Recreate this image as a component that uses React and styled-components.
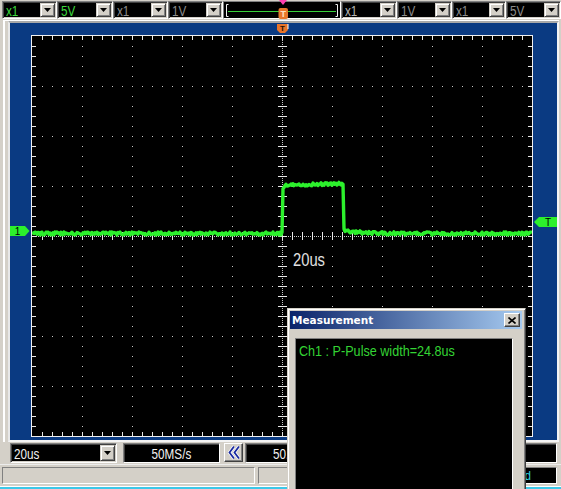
import React from 'react';
import styled, { createGlobalStyle } from 'styled-components';

const FACE = '#d4d0c8';
const BLUE = '#0a3a82';
const TRACE = '#2cf02c';

const GlobalStyle = createGlobalStyle`
  html, body {
    margin: 0;
    padding: 0;
    background: ${FACE};
  }
  body {
    font-family: "Liberation Sans", Arial, sans-serif;
  }
`;

function makeRandom(seed) {
  let s = seed;
  return () => {
    s = (s * 16807) % 2147483647;
    return s / 2147483647;
  };
}

// 10 x 8 divisions of 50px on a 500 x 400 screen
const buildGrid = () => {
  let dots = '';
  let ticks = '';
  for (let i = 1; i < 10; i++) {
    if (i === 5) continue;
    for (let y = 10; y < 400; y += 10) dots += `M${i * 50} ${y}h1v1h-1z`;
  }
  for (let j = 1; j < 8; j++) {
    if (j === 4) continue;
    for (let x = 10; x < 500; x += 10) dots += `M${x} ${j * 50}h1v1h-1z`;
  }
  for (let y = 0; y < 400; y += 2) dots += `M250 ${y}h1v1h-1z`;
  for (let x = 0; x < 500; x += 2) dots += `M${x} 200h1v1h-1z`;
  for (let y = 10; y < 400; y += 10) ticks += `M246 ${y}h9v1h-9z`;
  for (let x = 10; x < 500; x += 10) ticks += `M${x} 196h1v8h-1z`;
  for (let x = 10; x < 500; x += 10) ticks += `M${x} 0h1v4h-1zM${x} 396h1v4h-1z`;
  for (let y = 10; y < 400; y += 10) ticks += `M0 ${y}h4v1h-4zM496 ${y}h4v1h-4z`;
  return { dots, ticks };
};

const buildTrace = () => {
  const rnd = makeRandom(20240);
  const level = (x) => {
    if (x <= 250) return 197.5;
    if (x <= 311) return 149.4 - (x - 251) * 0.03 + (x < 254 ? (254 - x) * 0.8 : 0);
    return 197.5 - 3.5 * Math.exp(-(x - 312) / 14);
  };
  let d = '';
  for (let x = 0; x <= 500; x++) {
    const y = level(x) + (rnd() - 0.5) * 3;
    d += (x === 0 ? 'M' : 'L') + x + ' ' + y.toFixed(1);
  }
  return d;
};

const GRID = buildGrid();
const TRACE_PATH = buildTrace();

const Window = styled.div`
  position: relative;
  width: 561px;
  height: 489px;
  overflow: hidden;
  background: ${FACE};
  display: flex;
  flex-direction: column;
`;

const Narrow = styled.span`
  display: inline-block;
  font-family: "Liberation Sans", Arial, sans-serif;
  font-size: ${(p) => p.$size || 15}px;
  line-height: 1;
  white-space: nowrap;
  transform: scaleX(${(p) => p.$scale || 0.78});
  transform-origin: ${(p) => (p.$center ? 'center' : 'left')} center;
`;

/* ---------- top bar ---------- */

const TopBar = styled.div`
  display: flex;
  align-items: flex-start;
  height: 20px;
  padding: 1px 0 0 2px;
  box-sizing: border-box;
`;

const Combo = styled.div`
  display: flex;
  width: ${(p) => p.$w}px;
  height: ${(p) => p.$h || 18}px;
  box-sizing: border-box;
  border: 1px solid;
  border-color: #808080 #ffffff #ffffff #808080;
  padding: 1px;
  background: #000;
  box-shadow: inset 1px 1px #404040, inset -1px -1px ${FACE};
  flex: none;
`;

const Field = styled.div`
  flex: 1;
  display: flex;
  align-items: center;
  padding-left: 2px;
  overflow: hidden;
  color: ${(p) => p.$color || '#f0f0f0'};
`;

const DropButton = styled.div`
  width: 15px;
  flex: none;
  box-sizing: border-box;
  background: ${FACE};
  border: 1px solid;
  border-color: ${FACE} #404040 #404040 ${FACE};
  box-shadow: inset 1px 1px #fff, inset -1px -1px #808080;
  display: flex;
  align-items: center;
  justify-content: center;
`;

const Slider = styled.div`
  position: relative;
  width: 118px;
  height: 18px;
  flex: none;
  box-sizing: border-box;
  border: 1px solid;
  border-color: #808080 #ffffff #ffffff #808080;
  background: #000;
`;

const SliderKnob = styled.svg`
  position: absolute;
  left: 54px;
  top: -2px;
`;

/* ---------- scope area ---------- */

const MainArea = styled.div`
  display: flex;
  padding: 0 2px 0 3px;
  flex: none;
`;

const Frame = styled.div`
  flex: 1;
  border-top: 1px solid #ffffff;
  border-left: 2px solid #ffffff;
  padding-left: 3px;
  display: flex;
`;

const BluePanel = styled.div`
  position: relative;
  flex: 1;
  background: ${BLUE};
  border: 2px solid;
  border-color: #a8a8a8 #f4f4f4 #f4f4f4 #e8e8e8;
  padding: 12px 24px 3px 21px;
`;

const Screen = styled.div`
  width: 500px;
  height: 400px;
  border: 1px solid #f0f0f0;
  background: #000;
`;

const ScopeSvg = styled.svg`
  display: block;
`;

const Marker = styled.svg`
  position: absolute;
  left: ${(p) => p.$left}px;
  top: ${(p) => p.$top}px;
`;

/* ---------- bottom bars ---------- */

const BottomBar = styled.div`
  display: flex;
  align-items: flex-start;
  height: 22px;
  padding: 1px 4px 0 10px;
  box-sizing: border-box;
  flex: none;
`;

const Display = styled.div`
  width: ${(p) => (p.$w ? `${p.$w}px` : 'auto')};
  flex: ${(p) => (p.$w ? 'none' : '1')};
  height: 20px;
  margin-left: ${(p) => p.$gap || 0}px;
  box-sizing: border-box;
  border: 1px solid;
  border-color: #808080 #ffffff #ffffff #808080;
  box-shadow: inset 1px 1px #404040;
  background: #000;
  color: #f0f0f0;
  display: flex;
  align-items: center;
  justify-content: center;
`;

const ArrowButton = styled.div`
  width: 19px;
  height: 19px;
  margin-left: 4px;
  flex: none;
  box-sizing: border-box;
  background: ${FACE};
  border: 1px solid;
  border-color: #ffffff #404040 #404040 #ffffff;
  box-shadow: inset -1px -1px #808080;
  display: flex;
  align-items: center;
  justify-content: center;
`;

const StatusBar = styled.div`
  display: flex;
  height: 22px;
  padding: 2px 4px 2px 2px;
  gap: 3px;
  box-sizing: border-box;
  flex: none;
  border-top: 1px solid #ececec;
`;

const StatusPanel = styled.div`
  width: ${(p) => p.$w}px;
  flex: ${(p) => (p.$grow ? '1' : 'none')};
  box-sizing: border-box;
  border: 1px solid;
  border-color: #808080 #ffffff #ffffff #808080;
  background: ${(p) => (p.$dark ? '#000' : FACE)};
  color: #30d8e8;
  display: flex;
  align-items: center;
  padding-left: ${(p) => p.$pad || 0}px;
`;

const TaskLine = styled.div`
  height: 3px;
  flex: none;
  background: #3cc8e8;
  border-top: 1px solid #ffffff;
  box-sizing: border-box;
`;

/* ---------- measurement window ---------- */

const MeasureWindow = styled.div`
  position: absolute;
  left: 287px;
  top: 308px;
  width: 239px;
  height: 200px;
  box-sizing: border-box;
  background: ${FACE};
  border: 1px solid;
  border-color: ${FACE} #404040 #404040 ${FACE};
  box-shadow: inset 1px 1px #fff, inset -1px -1px #808080;
  padding: 2px 3px 2px 2px;
  display: flex;
  flex-direction: column;
`;

const TitleBar = styled.div`
  height: 18px;
  flex: none;
  display: flex;
  align-items: center;
  justify-content: space-between;
  padding: 0 2px 0 2px;
  background: linear-gradient(to right, #0a246a, #a6caf0);
`;

const Title = styled.span`
  font-family: "DejaVu Sans", Tahoma, sans-serif;
  font-weight: bold;
  font-size: 10.5px;
  color: #ffffff;
`;

const CloseButton = styled.div`
  width: 16px;
  height: 14px;
  box-sizing: border-box;
  background: ${FACE};
  border: 1px solid;
  border-color: #ffffff #404040 #404040 #ffffff;
  box-shadow: inset -1px -1px #808080;
  display: flex;
  align-items: center;
  justify-content: center;
`;

const MeasureBody = styled.div`
  flex: 1;
  display: flex;
  padding: 9px 9px 0 5px;
`;

const MeasureList = styled.div`
  flex: 1;
  background: #000;
  border: 1px solid;
  border-color: #808080 #ffffff #ffffff #808080;
  padding: 3px 3px 0 3px;
  color: #34d434;
`;

const DropArrow = () => (
  <svg width="7" height="4" viewBox="0 0 7 4">
    <path d="M0 0h7l-3.5 4z" fill="#000" />
  </svg>
);

const TopCombo = ({ w, color, children }) => (
  <Combo $w={w}>
    <Field $color={color}>
      <Narrow>{children}</Narrow>
    </Field>
    <DropButton>
      <DropArrow />
    </DropButton>
  </Combo>
);

export default function App() {
  return (
    <>
      <GlobalStyle />
      <Window>
        <TopBar>
          <TopCombo w={55} color="#3cd83c">x1</TopCombo>
          <TopCombo w={56} color="#3cd83c">5V</TopCombo>
          <TopCombo w={55} color="#8c8c8c">x1</TopCombo>
          <TopCombo w={55} color="#8c8c8c">1V</TopCombo>
          <Slider>
            <svg width="116" height="16" viewBox="0 0 116 16">
              <path d="M4.5 2.5H2.5V14.5H4.5" fill="none" stroke="#f0f0f0" />
              <path d="M111.5 2.5H113.5V14.5H111.5" fill="none" stroke="#f0f0f0" />
              <path d="M4 9.5H112" stroke="#38d038" />
            </svg>
            <SliderKnob width="11" height="20" viewBox="0 0 11 20">
              <path d="M1 0h8l-4 5z" fill="#ff3fae" />
              <rect x="0.5" y="8" width="9.5" height="11" rx="2" fill="#e8782c" />
              <text x="5.2" y="17" fontSize="9" fontWeight="bold" textAnchor="middle" fill="#ffe2c4" fontFamily="Liberation Sans, Arial, sans-serif">T</text>
            </SliderKnob>
          </Slider>
          <TopCombo w={56} color="#b4b4b4">x1</TopCombo>
          <TopCombo w={55} color="#8c8c8c">1V</TopCombo>
          <TopCombo w={54} color="#8c8c8c">x1</TopCombo>
          <TopCombo w={55} color="#8c8c8c">5V</TopCombo>
        </TopBar>

        <MainArea>
          <Frame>
            <BluePanel>
              <Screen>
                <ScopeSvg width="500" height="400" viewBox="0 0 500 400">
                  <path d={GRID.dots} fill="#c8c8c8" />
                  <path d={GRID.ticks} fill="#e8e8e8" />
                  <path d={TRACE_PATH} fill="none" stroke={TRACE} strokeWidth="3.4" strokeLinejoin="round" />
                  <text x="261" y="230" fontSize="18" textLength="32" lengthAdjust="spacingAndGlyphs" fill="#e2e2e2" fontFamily="Liberation Sans, Arial, sans-serif">20us</text>
                </ScopeSvg>
              </Screen>

              <Marker $left={267} $top={1} width="12" height="10" viewBox="0 0 12 10">
                <path d="M0 0h11v6l-3 3h-5l-3-3z" fill="#e8742a" />
                <path d="M11 0v5" stroke="#ffffff" />
                <text x="5.5" y="7" fontSize="8" fontWeight="bold" textAnchor="middle" fill="#2a1000" fontFamily="Liberation Sans, Arial, sans-serif">T</text>
              </Marker>

              <Marker $left={0} $top={203} width="20" height="10" viewBox="0 0 20 10">
                <path d="M0 0h15l4.5 5-4.5 5h-15z" fill={TRACE} />
                <text x="7.5" y="9" fontSize="10" textAnchor="middle" fill="#000" fontFamily="Liberation Sans, Arial, sans-serif">1</text>
              </Marker>

              <Marker $left={524} $top={194} width="23" height="10" viewBox="0 0 23 10">
                <path d="M0 5l5-5h18v10h-18z" fill={TRACE} />
                <text x="14" y="9" fontSize="10" textAnchor="middle" fill="#000" fontFamily="Liberation Sans, Arial, sans-serif">T</text>
              </Marker>
            </BluePanel>
          </Frame>
        </MainArea>

        <BottomBar>
          <Combo $w={107} $h={20}>
            <Field>
              <Narrow>20us</Narrow>
            </Field>
            <DropButton>
              <DropArrow />
            </DropButton>
          </Combo>
          <Display $w={97} $gap={6}>
            <Narrow $center>50MS/s</Narrow>
          </Display>
          <ArrowButton>
            <svg width="12" height="15" viewBox="0 0 12 15">
              <path d="M6 1.5L1.5 7.5L6 13.5M11 1.5L6.5 7.5L11 13.5" fill="none" stroke="#ffffff" strokeWidth="3.2" />
              <path d="M6 1.5L1.5 7.5L6 13.5M11 1.5L6.5 7.5L11 13.5" fill="none" stroke="#1a2aa0" strokeWidth="1.8" />
            </svg>
          </ArrowButton>
          <Display $w={92} $gap={2}>
            <Narrow $center>50.0us</Narrow>
          </Display>
          <Display $gap={3} />
        </BottomBar>

        <StatusBar>
          <StatusPanel $w={253} />
          <StatusPanel $w={166} />
          <StatusPanel $grow $dark $pad={56}>
            <Narrow $size={13} $scale={0.85}>Triggered</Narrow>
          </StatusPanel>
        </StatusBar>
        <TaskLine />

        <MeasureWindow>
          <TitleBar>
            <Title>Measurement</Title>
            <CloseButton>
              <svg width="8" height="7" viewBox="0 0 8 7">
                <path d="M0.5 0.5L7.5 6.5M7.5 0.5L0.5 6.5" stroke="#000" strokeWidth="1.6" />
              </svg>
            </CloseButton>
          </TitleBar>
          <MeasureBody>
            <MeasureList>
              <Narrow $size={15} $scale={0.84}>Ch1 : P-Pulse width=24.8us</Narrow>
            </MeasureList>
          </MeasureBody>
        </MeasureWindow>
      </Window>
    </>
  );
}
